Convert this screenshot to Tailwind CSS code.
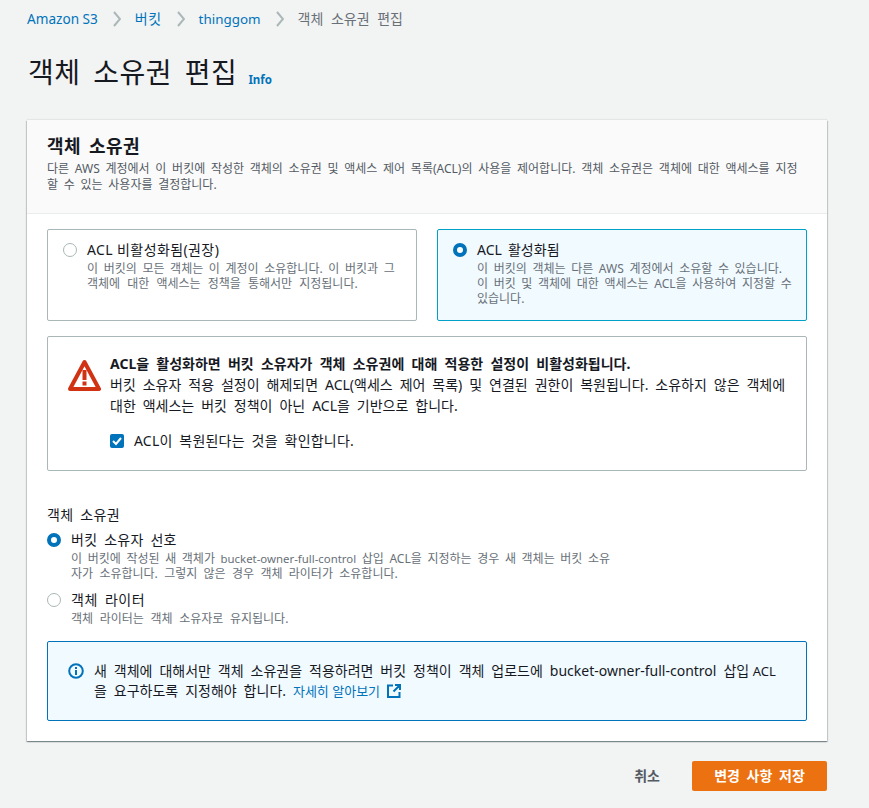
<!DOCTYPE html>
<html lang="ko">
<head>
  <meta charset="UTF-8" />
  <title>객체 소유권 편집</title>
  <script src="https://cdn.jsdelivr.net/npm/@tailwindcss/browser@4"></script>
</head>
<body class="bg-[#f2f3f3] font-['Noto_Sans','Noto_Sans_CJK_KR',sans-serif] text-[#16191f] text-[14px] leading-[22px]">
  <div class="w-[869px] h-[808px] overflow-hidden px-[27px] pt-[8px]">

    <!-- breadcrumb -->
    <nav class="flex items-center h-[22px] text-[#0073bb]">
      <a class="text-[13.6px]">Amazon S3</a>
      <svg class="w-[8px] h-[16px] ml-[15px] mr-[14px]" viewBox="0 0 8 16" fill="none" stroke="#aab7b8" stroke-width="2"><path d="M1 1l6 7-6 7"/></svg>
      <a class="tracking-[0.5px]">버킷</a>
      <svg class="w-[8px] h-[16px] ml-[15px] mr-[14px]" viewBox="0 0 8 16" fill="none" stroke="#aab7b8" stroke-width="2"><path d="M1 1l6 7-6 7"/></svg>
      <a class="text-[13.4px]">thinggom</a>
      <svg class="w-[8px] h-[16px] ml-[15px] mr-[14px]" viewBox="0 0 8 16" fill="none" stroke="#aab7b8" stroke-width="2"><path d="M1 1l6 7-6 7"/></svg>
      <span class="text-[#687078] [word-spacing:4px]">객체 소유권 편집</span>
    </nav>

    <div class="flex items-baseline mt-[22px] ml-[1px]">
      <h1 class="text-[28px] leading-[40px] tracking-[0.5px] [word-spacing:5px]">객체 소유권 편집</h1>
      <a class="ml-[11px] translate-y-[1px] text-[11.5px] font-bold text-[#0073bb]">Info</a>
    </div>

    <!-- card -->
    <section class="mt-[28px] w-[800px] h-[621px] bg-white shadow-[0_1px_1px_0_rgba(0,28,36,0.3),1px_1px_1px_0_rgba(0,28,36,0.15),-1px_1px_1px_0_rgba(0,28,36,0.15),0_-1px_1px_0_rgba(0,28,36,0.06)]">
      <header class="h-[94px] bg-[#fafafa] border-b border-[#eaeded] px-[20px] pt-[14px]">
        <h2 class="text-[18px] font-bold leading-[24px] tracking-[0.4px] [word-spacing:3px]">객체 소유권</h2>
        <p class="mt-[3px] text-[12px] leading-[16px] text-[#545b64] [word-spacing:2.6px]">다른 AWS 계정에서 이 버킷에 작성한 객체의 소유권 및 액세스 제어 목록(ACL)의 사용을 제어합니다. 객체 소유권은 객체에 대한 액세스를 지정<br>할 수 있는 사용자를 결정합니다.</p>
      </header>

      <div class="px-[20px] pt-[15px]">
        <div class="grid grid-cols-2 gap-[20px]">
          <div class="h-[92px] border border-[#aab7b8] rounded-[2px] flex px-[15px] pt-[9px] gap-[10px]">
            <span class="mt-[4px] w-[14px] h-[14px] shrink-0 rounded-full border border-[#aab7b8] bg-white"></span>
            <div class="whitespace-nowrap">
              <div class="leading-[22px] tracking-[0.4px]">ACL 비활성화됨(권장)</div>
              <p class="text-[12px] leading-[15px] text-[#687078] [word-spacing:2.5px]">이 버킷의 모든 객체는 이 계정이 소유합니다. 이 버킷과 그<br><span class="[word-spacing:4px]">객체에 대한 액세스는 정책을 통해서만 지정됩니다.</span></p>
            </div>
          </div>
          <div class="h-[92px] border border-[#00a1c9] bg-[#f1faff] rounded-[2px] flex px-[15px] pt-[9px] gap-[10px]">
            <span class="mt-[4px] w-[14px] h-[14px] shrink-0 rounded-full border-[4px] border-[#0073bb] bg-white"></span>
            <div class="whitespace-nowrap">
              <div class="leading-[22px] [word-spacing:2.5px]">ACL 활성화됨</div>
              <p class="text-[12px] leading-[15px] text-[#687078] [word-spacing:2.5px]">이 버킷의 객체는 다른 AWS 계정에서 소유할 수 있습니다.<br>이 버킷 및 객체에 대한 액세스는 ACL을 사용하여 지정할 수<br>있습니다.</p>
            </div>
          </div>
        </div>

        <!-- warning -->
        <div class="mt-[15px] h-[135px] border border-[#aab7b8] rounded-[2px] flex pl-[20px] pr-[16px] pt-[17px] gap-[9px]">
          <svg class="w-[33px] h-[33px] mt-[5px] shrink-0" viewBox="0 0 33 33">
            <path d="M16.5 3 L31 30 H2 Z" fill="none" stroke="#d13212" stroke-width="4" stroke-linejoin="round"/>
            <rect x="14.5" y="11" width="4" height="10" fill="#d13212"/>
            <rect x="14.5" y="22.5" width="4" height="4" fill="#d13212"/>
          </svg>
          <div class="w-[680px] whitespace-nowrap">
            <p class="font-bold leading-[20px] [word-spacing:3.6px]">ACL을 활성화하면 버킷 소유자가 객체 소유권에 대해 적용한 설정이 비활성화됩니다.</p>
            <p class="leading-[21px] [word-spacing:3.3px]">버킷 소유자 적용 설정이 해제되면 ACL(액세스 제어 목록) 및 연결된 권한이 복원됩니다. 소유하지 않은 객체에<br>대한 액세스는 버킷 정책이 아닌 ACL을 기반으로 합니다.</p>
            <label class="mt-[14px] flex items-center gap-[10px] leading-[22px] tracking-[0.2px] [word-spacing:3px]">
              <span class="w-[14px] h-[14px] bg-[#0073bb] rounded-[2px] flex items-center justify-center">
                <svg class="w-[10px] h-[10px]" viewBox="0 0 10 10" fill="none" stroke="white" stroke-width="2"><path d="M1 5l3 3 5-6"/></svg>
              </span>
              ACL이 복원된다는 것을 확인합니다.
            </label>
          </div>
        </div>

        <!-- owner options -->
        <div class="mt-[33px] leading-[22px] tracking-[0.3px] [word-spacing:3px]">객체 소유권</div>
        <div class="flex gap-[10px] mt-[3px]">
          <span class="mt-[4px] w-[14px] h-[14px] shrink-0 rounded-full border-[4px] border-[#0073bb] bg-white"></span>
          <div class="whitespace-nowrap">
            <div class="leading-[22px] tracking-[0.25px] [word-spacing:3px]">버킷 소유자 선호</div>
            <p class="text-[12px] leading-[15px] text-[#687078] [word-spacing:2.5px]">이 버킷에 작성된 새 객체가 <span class="text-[11.4px]">bucket-owner-full-control</span> 삽입 ACL을 지정하는 경우 새 객체는 버킷 소유<br><span class="[word-spacing:3.2px]">자가 소유합니다. 그렇지 않은 경우 객체 라이터가 소유합니다.</span></p>
          </div>
        </div>
        <div class="flex gap-[10px] mt-[8px]">
          <span class="mt-[4px] w-[14px] h-[14px] shrink-0 rounded-full border border-[#aab7b8] bg-white"></span>
          <div class="whitespace-nowrap">
            <div class="leading-[22px] tracking-[0.5px] [word-spacing:3px]">객체 라이터</div>
            <p class="text-[12px] leading-[15px] text-[#687078] [word-spacing:3.5px]">객체 라이터는 객체 소유자로 유지됩니다.</p>
          </div>
        </div>

        <!-- info -->
        <div class="mt-[15px] h-[80px] border border-[#0073bb] bg-[#f1faff] rounded-[2px] flex pl-[20px] pr-[20px] pt-[19px] gap-[10px]">
          <svg class="w-[16px] h-[16px] mt-[2px] shrink-0" viewBox="0 0 16 16">
            <circle cx="8" cy="8" r="6.8" fill="none" stroke="#0073bb" stroke-width="2"/>
            <rect x="7" y="7" width="2" height="5" fill="#0073bb"/>
            <rect x="7" y="4" width="2" height="2" fill="#0073bb"/>
          </svg>
          <p class="leading-[20px] whitespace-nowrap [word-spacing:3.3px]">새 객체에 대해서만 객체 소유권을 적용하려면 버킷 정책이 객체 업로드에 bucket-owner-full-control <span class="[word-spacing:0]">삽입 <span class="text-[13px]">ACL</span></span><br>을 요구하도록 지정해야 합니다. <a class="text-[#0073bb] text-[13px] [word-spacing:0]">자세히 알아보기</a>
            <svg class="inline w-[14px] h-[14px] align-[-2px]" viewBox="0 0 14 14" fill="none" stroke="#0073bb" stroke-width="2"><path d="M6 1.5H1v11.5h11.5V8M8 1h5v5M13 1L6.5 7.5"/></svg>
          </p>
        </div>
      </div>
    </section>

    <!-- actions -->
    <div class="w-[800px] mt-[20px] flex items-center justify-end">
      <button class="font-bold text-[14px] text-[#545b64] mr-[32px]">취소</button>
      <button class="w-[135px] h-[30px] bg-[#ec7211] rounded-[2px] text-white font-bold text-[14px] leading-[20px] [word-spacing:3px]">변경 사항 저장</button>
    </div>
  </div>
</body>
</html>
